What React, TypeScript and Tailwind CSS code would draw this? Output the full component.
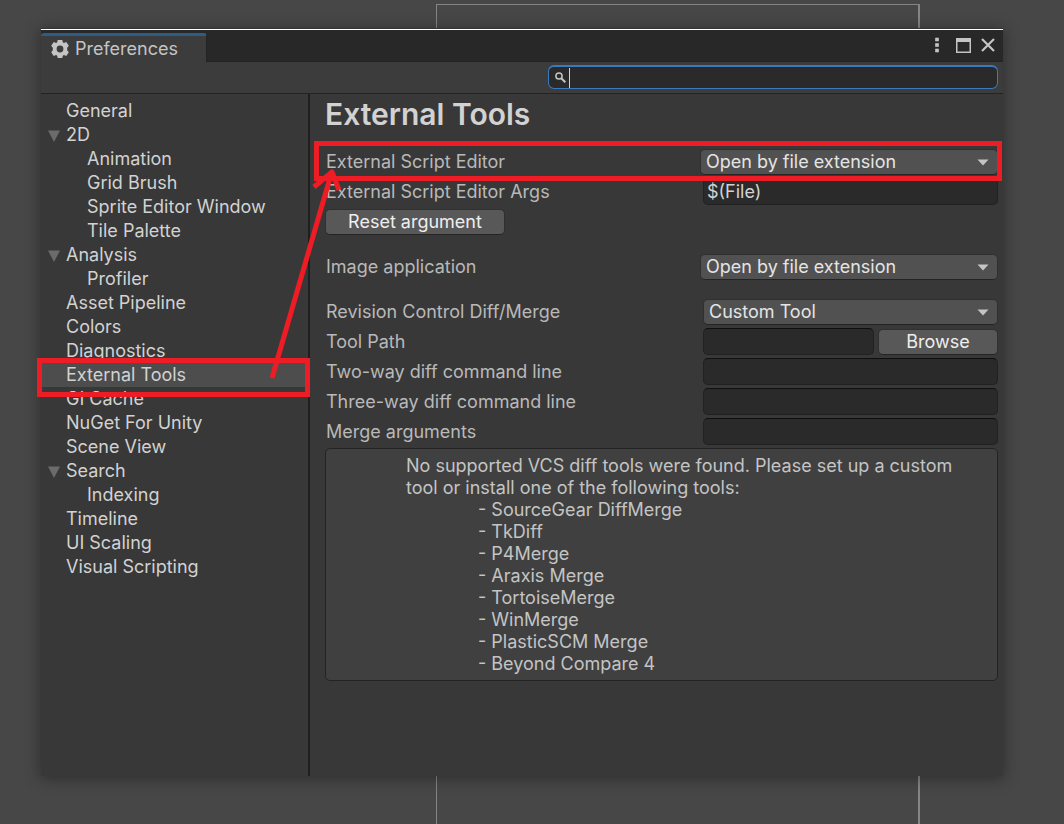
import { ReactNode } from "react";

type NavItem = { label: string; level?: number; group?: boolean; active?: boolean };

const NAV: NavItem[] = [
  { label: "General" },
  { label: "2D", group: true },
  { label: "Animation", level: 1 },
  { label: "Grid Brush", level: 1 },
  { label: "Sprite Editor Window", level: 1 },
  { label: "Tile Palette", level: 1 },
  { label: "Analysis", group: true },
  { label: "Profiler", level: 1 },
  { label: "Asset Pipeline" },
  { label: "Colors" },
  { label: "Diagnostics" },
  { label: "External Tools", active: true },
  { label: "GI Cache" },
  { label: "NuGet For Unity" },
  { label: "Scene View" },
  { label: "Search", group: true },
  { label: "Indexing", level: 1 },
  { label: "Timeline" },
  { label: "UI Scaling" },
  { label: "Visual Scripting" },
];

const TOOLS = [
  "SourceGear DiffMerge",
  "TkDiff",
  "P4Merge",
  "Araxis Merge",
  "TortoiseMerge",
  "WinMerge",
  "PlasticSCM Merge",
  "Beyond Compare 4",
];

const FIELD =
  "mt-px block h-[27px] w-full min-w-0 self-start rounded-[5px] border border-[#212121] border-t-[#0f0f0f] bg-[#2a2a2a] px-[3px] text-[#d2d2d2] outline-none";
const BUTTON =
  "h-[26px] rounded-[5px] border border-[#303030] border-b-[#242424] bg-[#585858] leading-6 text-[#eeeeee]";

function GearIcon() {
  return (
    <svg viewBox="0 0 18 18" className="size-[18px] shrink-0" aria-hidden="true">
      <path
        fill="#c4c4c4"
        fillRule="evenodd"
        d="M6.700 0h4.600l.5 2.300 1.100.6 2.400-.9 2.500 3.800-1.600 1.900v2.600l1.600 1.900-2.500 3.800-2.400-.9-1.100.6-.5 2.300H6.700l-.5-2.300-1.100-.6-2.400.9L.2 12.200l1.600-1.900V7.700L.2 5.800 2.700 2l2.400.9 1.100-.6ZM9 5.600a3.400 3.400 0 1 0 0 6.800 3.400 3.400 0 0 0 0-6.800Z"
      />
    </svg>
  );
}

function Row({ label, id, children }: { label: string; id: string; children: ReactNode }) {
  return (
    <div className="grid h-[30px] grid-cols-[378fr_295fr] items-center">
      <label htmlFor={id} className="pl-px text-[#b9b9b9]">
        {label}
      </label>
      {children}
    </div>
  );
}

function Dropdown({ id, value, wide }: { id: string; value: string; wide?: boolean }) {
  return (
    <div className={wide ? "relative -ml-[3px]" : "relative"}>
      <select
        id={id}
        className="block h-[26px] w-full appearance-none rounded-[5px] border border-[#303030] border-b-[#242424] bg-[#515151] pr-8 pl-[5px] text-[#e4e4e4] outline-none"
      >
        <option>{value}</option>
      </select>
      <svg viewBox="0 0 12 7" className="pointer-events-none absolute top-[10px] right-[9px] h-[7px] w-3" aria-hidden="true">
        <path d="M0.500 0.500h11L6 6.500Z" fill="#c4c4c4" />
      </svg>
    </div>
  );
}

function Sidebar() {
  return (
    <nav className="w-[269px] shrink-0 border-r-2 border-[#1f1f1f] pt-[5px]">
      <ul>
        {NAV.map((item) => (
          <li key={item.label} className="relative">
            <a
              href="#"
              aria-current={item.active ? "page" : undefined}
              className={`flex h-6 items-center text-[#d2d2d2] ${item.active ? "bg-[#4d4d4d]" : ""} ${
                item.level ? "pl-[46px]" : item.group ? "pl-[7px]" : "pl-[25px]"
              }`}
            >
              {item.group && (
                <svg viewBox="0 0 12 12" className="mt-[2px] mr-[6px] size-3 shrink-0" aria-hidden="true">
                  <path d="M0 0.500h12L6 12Z" fill="#6b6b6b" />
                </svg>
              )}
              {item.label}
            </a>
            {item.active && (
              <div className="pointer-events-none absolute -top-[5px] -right-[2px] -bottom-[10px] -left-[4px] z-10 border-5 border-[#ee1c24]" />
            )}
          </li>
        ))}
      </ul>
    </nav>
  );
}

function ExternalTools() {
  return (
    <main className="min-w-0 flex-1 pr-[5px] pl-[15px]">
      <h1 className="h-[53px] text-[30px] leading-10 font-semibold text-[#d2d2d2]">External Tools</h1>
      <div className="relative">
        <Row label="External Script Editor" id="editor">
          <Dropdown id="editor" value="Open by file extension" wide />
        </Row>
        <div className="pointer-events-none absolute -top-[6px] -right-[4px] -bottom-[4px] -left-[11px] z-10 border-5 border-[#ee1c24]" />
      </div>
      <Row label="External Script Editor Args" id="args">
        <input id="args" className={FIELD} defaultValue="$(File)" />
      </Row>
      <div className="flex h-[30px] items-center">
        <button type="button" className={`${BUTTON} w-[180px]`}>
          Reset argument
        </button>
      </div>
      <div className="py-[15px]">
        <Row label="Image application" id="image">
          <Dropdown id="image" value="Open by file extension" wide />
        </Row>
      </div>
      <Row label="Revision Control Diff/Merge" id="diff">
        <Dropdown id="diff" value="Custom Tool" />
      </Row>
      <Row label="Tool Path" id="path">
        <div className="flex h-[30px] items-center gap-1">
          <input id="path" className={FIELD} />
          <button type="button" className={`${BUTTON} w-[120px] shrink-0`}>
            Browse
          </button>
        </div>
      </Row>
      <Row label="Two-way diff command line" id="two">
        <input id="two" className={FIELD} />
      </Row>
      <Row label="Three-way diff command line" id="three">
        <input id="three" className={FIELD} />
      </Row>
      <Row label="Merge arguments" id="merge">
        <input id="merge" className={FIELD} />
      </Row>
      <section className="mt-px rounded-[5px] border border-[#232323] bg-[#404040] pt-[6px] pr-6 pb-[5px] pl-20 leading-[22px] text-[#c4c4c4]">
        <p>
          No supported VCS diff tools were found. Please set up a custom
          <br />
          tool or install one of the following tools:
        </p>
        <ul className="pl-[72px]">
          {TOOLS.map((tool) => (
            <li key={tool}>- {tool}</li>
          ))}
        </ul>
      </section>
    </main>
  );
}

export default function App() {
  return (
    <div className="relative isolate flex min-h-screen flex-col bg-[#474747] pt-[28px] pr-[61px] pb-12 pl-[41px] font-['Inter',sans-serif] text-[18px] leading-6">
      <div className="absolute top-1 right-36 bottom-0 left-[436px] -z-10 border-t border-r-2 border-l border-[#858585]" />
      <div className="flex flex-1 flex-col border-t border-[#333333] bg-[#383838] shadow-[0_2px_14px_1px_rgba(0,0,0,0.35)]">
        <header className="flex h-[33px] items-stretch border-t border-white bg-[#282828]">
          <div className="flex items-end">
            <div className="-mb-px flex h-[30px] w-[166px] items-center gap-[6px] rounded-t-[3px] border-t-3 border-r border-t-[#2c5d87] border-r-[#232323] bg-[#3c3c3c] pb-[2px] pl-[10px] text-[#c4c4c4]">
              <GearIcon />
              Preferences
            </div>
          </div>
          <div className="flex flex-1 items-center justify-end gap-[10px] border-b border-[#232323] pr-2 pb-px text-[#c4c4c4]">
            <button type="button" aria-label="Menu" className="mr-[7px]">
              <svg viewBox="0 0 4 16" className="h-4 w-1" aria-hidden="true">
                <path d="M.4 1h3.200v3H.4zM.4 6.500h3.200v3H.4zM.4 12h3.200v3H.4z" stroke="currentColor" strokeWidth=".6" strokeLinejoin="round" fill="currentColor" />
              </svg>
            </button>
            <button type="button" aria-label="Maximize">
              <svg viewBox="0 0 15 15" className="size-[15px]" aria-hidden="true">
                <path d="M0 0h15v15H0ZM1.500 4v9.500h12V4Z" fill="currentColor" fillRule="evenodd" />
              </svg>
            </button>
            <button type="button" aria-label="Close">
              <svg viewBox="0 0 14 14" className="size-[14px]" aria-hidden="true">
                <path d="M1 1l12 12M13 1L1 13" stroke="currentColor" strokeWidth="2.200" />
              </svg>
            </button>
          </div>
        </header>
        <div className="flex h-8 justify-end border-b border-[#232323] bg-[#3c3c3c] pt-[3px] pr-[5px]">
          <label className="flex h-6 w-[450px] items-center rounded-[6px] border border-t-2 border-[#3a79bb] bg-[#2a2a2a] pl-[6px]">
            <svg viewBox="0 0 11 11" className="mr-[3px] size-[11px] shrink-0" aria-label="Search">
              <circle cx="4" cy="4" r="3.100" fill="none" stroke="#c4c4c4" strokeWidth="1.500" />
              <path d="M6.300 6.300l4 4" stroke="#c4c4c4" strokeWidth="2" />
            </svg>
            <span className="h-5 w-px bg-[#d2d2d2]" />
            <input aria-label="Search preferences" className="h-5 min-w-0 flex-1 bg-transparent px-1 text-[#d2d2d2] outline-none" />
          </label>
        </div>
        <div className="relative flex flex-1">
          <Sidebar />
          <ExternalTools />
          <svg
            viewBox="0 0 40 220"
            className="pointer-events-none absolute top-[70px] left-[226px] z-20 h-[220px] w-10 overflow-visible"
            aria-hidden="true"
          >
            <path
              d="M5 214L65 7M47 23L65 8L72 26"
              fill="none"
              stroke="#ee1c24"
              strokeWidth="5"
              strokeLinejoin="round"
            />
          </svg>
        </div>
      </div>
    </div>
  );
}
